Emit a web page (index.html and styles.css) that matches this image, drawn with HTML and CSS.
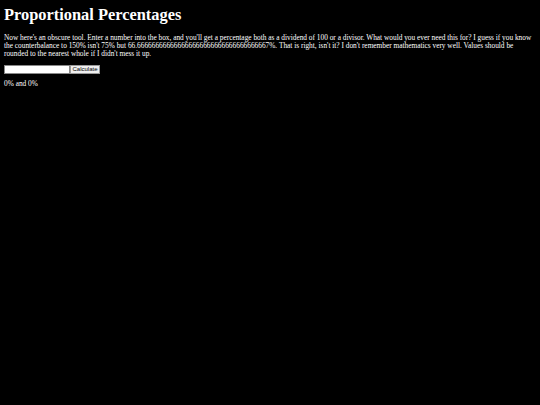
FILE: index.html
```html
<!DOCTYPE html>
<html>
<head>
<meta charset="utf-8">
<title>Proportional Percentages</title>
<link rel="stylesheet" href="styles.css">
</head>
<body>
<h1 class="title">Proportional Percentages</h1>
<p class="intro">Now here's an obscure tool. Enter a number into the box, and you'll get a percentage both as a dividend of 100 or a divisor. What would you ever need this for? I guess if you know the counterbalance to 150% isn't 75% but 66.666666666666666666666666666666666667%. That is right, isn't it? I don't remember mathematics very well. Values should be rounded to the nearest whole if I didn't mess it up.</p>
<form class="calc">
<input class="num" type="text"><button class="btn" type="button">Calculate</button>
</form>
<p class="result">0% and 0%</p>
</body>
</html>
```
FILE: styles.css
```css
html, body {
  background: #000;
}
body {
  margin: 0;
  padding: 4px;
  color: #fff;
  font-family: "Liberation Serif", serif;
}
.title {
  font-size: 16.4px;
  line-height: 18px;
  margin: 2px 0 10px;
  font-weight: bold;
}
.intro {
  font-size: 7.35px;
  line-height: 8px;
  margin: 0 0 7px;
}
.calc {
  display: flex;
  margin: 0 0 6px;
}
.num {
  width: 66px;
  height: 9px;
  box-sizing: border-box;
  border: 1px solid #888;
  background: #fff;
  padding: 0;
  margin: 0;
}
.btn {
  height: 9px;
  box-sizing: border-box;
  width: 30px;
  padding: 0;
  margin: 0;
  border: 1px solid #999;
  background: #efefef;
  color: #000;
  font-family: "Liberation Sans", sans-serif;
  font-size: 6px;
  line-height: 7px;
}
.result {
  font-size: 7.35px;
  line-height: 8px;
  margin: 0;
}
```
